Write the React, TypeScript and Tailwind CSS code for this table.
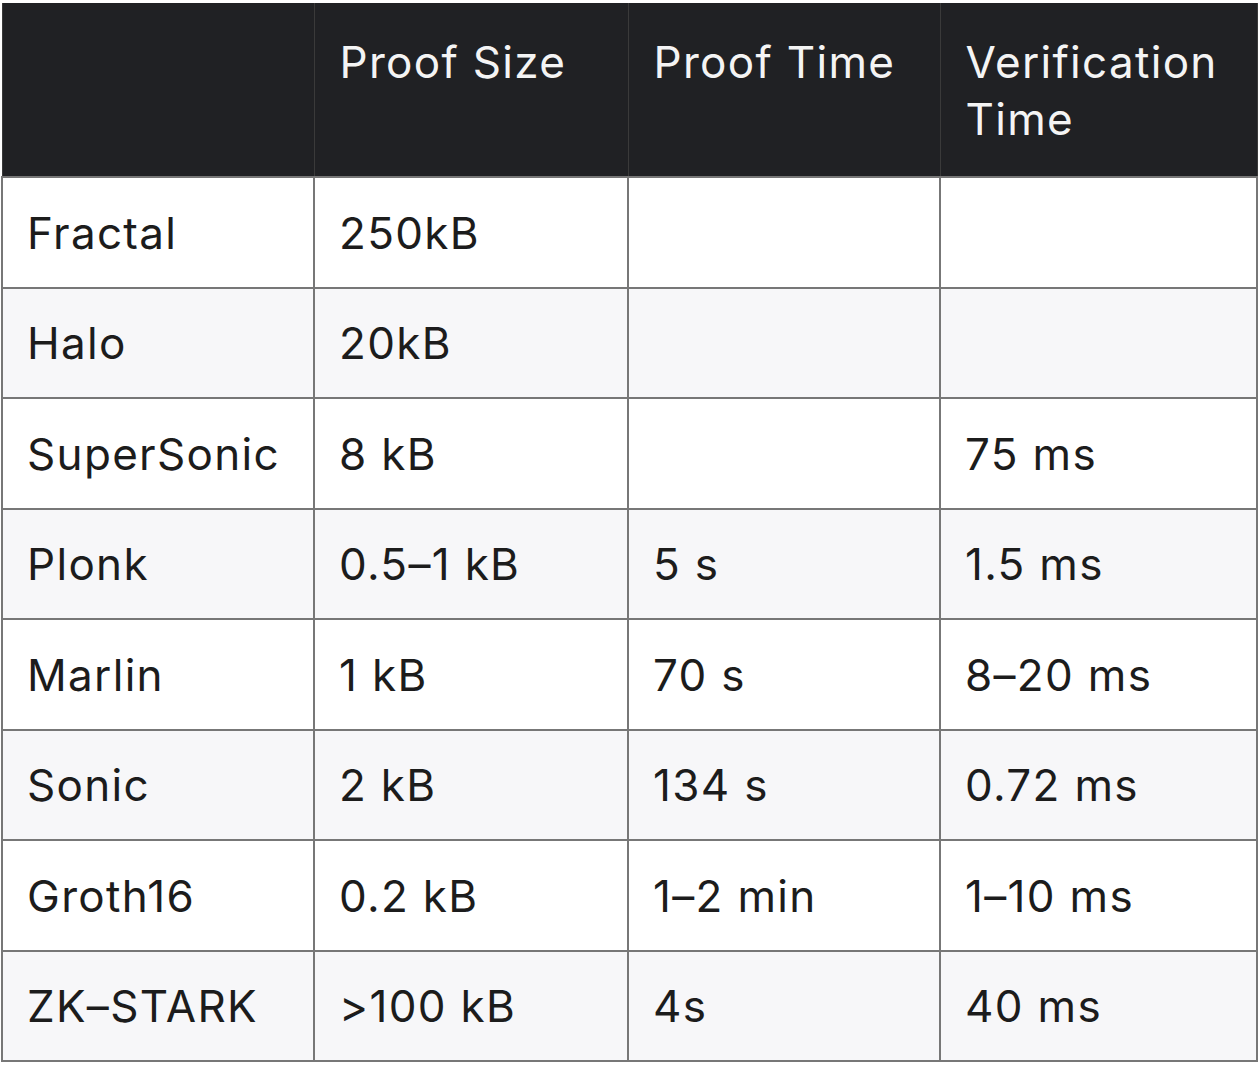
const rows: [string, string, string, string][] = [
  ["Fractal", "250kB", "", ""],
  ["Halo", "20kB", "", ""],
  ["SuperSonic", "8 kB", "", "75 ms"],
  ["Plonk", "0.5–1 kB", "5 s", "1.5 ms"],
  ["Marlin", "1 kB", "70 s", "8–20 ms"],
  ["Sonic", "2 kB", "134 s", "0.72 ms"],
  ["Groth16", "0.2 kB", "1–2 min", "1–10 ms"],
  ["ZK–STARK", ">100 kB", "4s", "40 ms"],
];

const heads = ["", "Proof Size", "Proof Time", "Verification Time"];

export default function App() {
  return (
    <div
      className="w-[1260px] h-[1068px] bg-white pt-[3px] pl-[1px]"
      style={{ fontFamily: "Inter, 'Noto Sans', sans-serif" }}
    >
      <table className="border-collapse table-fixed w-[1255px]">
        <colgroup>
          <col className="w-[312px]" />
          <col className="w-[314px]" />
          <col className="w-[312px]" />
          <col className="w-[317px]" />
        </colgroup>
        <thead>
          <tr className="h-[174px] bg-[#202124]">
            {heads.map((h, i) => (
              <th
                key={i}
                className="border-x border-[#3a3a3a] align-top text-left font-normal text-[#f4f4f4] text-[44px] tracking-[0.03em] leading-[57px] pl-[25px] pr-2 pt-[31px]"
              >
                {h}
              </th>
            ))}
          </tr>
        </thead>
        <tbody>
          {rows.map((r, i) => (
            <tr
              key={r[0]}
              className={i % 2 === 0 ? "h-[111px] bg-white" : "h-[110px] bg-[#f7f7f9]"}
            >
              {r.map((c, j) => (
                <td
                  key={j}
                  className="border-2 border-[#777777] text-[#1c1c1c] text-[44px] tracking-[0.03em] leading-none pl-[24px] align-middle"
                >
                  {c}
                </td>
              ))}
            </tr>
          ))}
        </tbody>
      </table>
    </div>
  );
}
